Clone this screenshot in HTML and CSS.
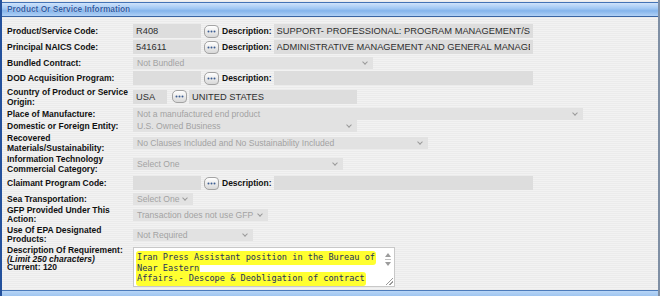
FILE: index.html
```html
<!DOCTYPE html>
<html lang="en">
<head>
  <meta charset="UTF-8" />
  <title>Product Or Service Information</title>
  <link rel="stylesheet" href="styles.css">
</head>
<body>
  <div class="panel">
    <div class="panel-head">Product Or Service Information</div>

    <div class="form">
      <label class="lbl">Product/Service Code:</label>
      <div class="field">
        <input class="txt code" value="R408" readonly>
        <button class="pick"><svg width="9" height="3" viewBox="0 0 9 3"><circle cx="1.5" cy="1.5" r="1"/><circle cx="4.5" cy="1.5" r="1"/><circle cx="7.5" cy="1.5" r="1"/></svg></button>
        <span class="lbl-inline">Description:</span>
        <input class="txt desc" value="SUPPORT- PROFESSIONAL: PROGRAM MANAGEMENT/SUPPORT" readonly>
      </div>

      <label class="lbl">Principal NAICS Code:</label>
      <div class="field">
        <input class="txt code" value="541611" readonly>
        <button class="pick"><svg width="9" height="3" viewBox="0 0 9 3"><circle cx="1.5" cy="1.5" r="1"/><circle cx="4.5" cy="1.5" r="1"/><circle cx="7.5" cy="1.5" r="1"/></svg></button>
        <span class="lbl-inline">Description:</span>
        <input class="txt desc" value="ADMINISTRATIVE MANAGEMENT AND GENERAL MANAGEMENT CONSULTING SERVICES" readonly>
      </div>

      <label class="lbl">Bundled Contract:</label>
      <div class="field">
        <div class="sel w-bundled">Not Bundled</div>
      </div>

      <label class="lbl">DOD Acquisition Program:</label>
      <div class="field">
        <input class="txt code" value="" readonly>
        <button class="pick"><svg width="9" height="3" viewBox="0 0 9 3"><circle cx="1.5" cy="1.5" r="1"/><circle cx="4.5" cy="1.5" r="1"/><circle cx="7.5" cy="1.5" r="1"/></svg></button>
        <span class="lbl-inline">Description:</span>
        <input class="txt desc" value="" readonly>
      </div>

      <label class="lbl">Country of Product or Service Origin:</label>
      <div class="field">
        <input class="txt country" value="USA" readonly>
        <button class="pick pick-country"><svg width="9" height="3" viewBox="0 0 9 3"><circle cx="1.5" cy="1.5" r="1"/><circle cx="4.5" cy="1.5" r="1"/><circle cx="7.5" cy="1.5" r="1"/></svg></button>
        <input class="txt country-name" value="UNITED STATES" readonly>
      </div>

      <label class="lbl">Place of Manufacture:</label>
      <div class="field">
        <div class="sel w-place">Not a manufactured end product</div>
      </div>

      <label class="lbl">Domestic or Foreign Entity:</label>
      <div class="field">
        <div class="sel w-entity">U.S. Owned Business</div>
      </div>

      <label class="lbl">Recovered Materials/Sustainability:</label>
      <div class="field">
        <div class="sel w-recovered">No Clauses Included and No Sustainability Included</div>
      </div>

      <label class="lbl">Information Technology Commercial Category:</label>
      <div class="field">
        <div class="sel w-it">Select One</div>
      </div>

      <label class="lbl">Claimant Program Code:</label>
      <div class="field">
        <input class="txt code" value="" readonly>
        <button class="pick"><svg width="9" height="3" viewBox="0 0 9 3"><circle cx="1.5" cy="1.5" r="1"/><circle cx="4.5" cy="1.5" r="1"/><circle cx="7.5" cy="1.5" r="1"/></svg></button>
        <span class="lbl-inline">Description:</span>
        <input class="txt desc" value="" readonly>
      </div>

      <label class="lbl">Sea Transportation:</label>
      <div class="field">
        <div class="sel w-sea">Select One</div>
      </div>

      <label class="lbl lbl-tight">GFP Provided Under This Action:</label>
      <div class="field">
        <div class="sel w-gfp">Transaction does not use GFP</div>
      </div>

      <label class="lbl lbl-tight">Use Of EPA Designated Products:</label>
      <div class="field">
        <div class="sel w-epa">Not Required</div>
      </div>

      <div class="lbl lbl-req">
        <div>Description Of Requirement:</div>
        <div class="note">(Limit 250 characters)</div>
        <div>Current: 120</div>
      </div>
      <div class="field field-top">
        <div class="memo">
          <div class="memo-text"><span class="hl">Iran Press Assistant position in the Bureau of</span><br><span class="hl">Near Eastern</span><br><span class="hl">Affairs.- Descope &amp; Deobligation of contract</span></div>
          <div class="memo-bar">
            <span class="arr arr-up"></span>
            <span class="arr-line"></span>
            <span class="arr arr-down"></span>
            <span class="grip"></span>
          </div>
        </div>
      </div>
    </div>

    <div class="panel-foot"></div>
  </div>
</body>
</html>
```

FILE: styles.css
```css
:root {
  --border-blue: #24519c;
  --head-text: #2f5ca3;
  --field-bg: #dddddd;
  --select-bg: #e2e2e2;
  --label-color: #111111;
  --value-color: #2e2e2e;
  --muted: #a3a3a3;
  --marker: #ffff30;
}

* {
  box-sizing: border-box;
}

body {
  margin: 0;
  font-family: "Liberation Sans", Arial, sans-serif;
  background: #ffffff;
}

.panel {
  height: 296px;
  display: flex;
  flex-direction: column;
  padding-top: 2px;
  border-left: 2px solid var(--border-blue);
  border-right: 2px solid #7f8fa4;
  background: repeating-linear-gradient(to bottom, #f2f2f2 0 1px, #ebebeb 1px 2px);
}

.panel-head {
  height: 15px;
  padding-left: 5px;
  border-top: 1px solid #4373b6;
  border-bottom: 1px solid #3965a3;
  background: linear-gradient(#cfe3fb, #9ec6f3 45%, #84b4eb 60%, #b0d1f6);
  color: var(--head-text);
  font-size: 8.3px;
  font-weight: bold;
  line-height: 13px;
  text-shadow: 0 0 1px #ffffff;
}

.form {
  flex: 1;
  display: grid;
  grid-template-columns: 126px 1fr;
  grid-template-rows: 16px 16px 15px 16px 21px 13px 12px 21px 21px 18px 13px 19px 22px auto;
  padding: 6px 0 0 5px;
}

.lbl {
  align-self: center;
  color: var(--label-color);
  font-size: 8.5px;
  font-weight: bold;
  line-height: 10px;
}

.lbl-tight {
  line-height: 9px;
}

.lbl-req {
  align-self: start;
  line-height: 8.6px;
}

.note {
  font-style: italic;
}

.field {
  display: flex;
  align-items: center;
}

.field-top {
  align-items: flex-start;
}

.txt {
  height: 14px;
  margin: 0;
  padding: 0 3px;
  border: none;
  outline: none;
  background: var(--field-bg);
  color: var(--value-color);
  font-family: "Liberation Sans", Arial, sans-serif;
  font-size: 9.3px;
}

.code {
  width: 68px;
}

.desc {
  width: 259px;
  margin-left: 2px;
}

.country {
  width: 34px;
}

.country-name {
  width: 168px;
  margin-left: 2px;
}

.pick {
  width: 15px;
  height: 13px;
  margin-left: 3px;
  padding: 0;
  display: flex;
  align-items: center;
  justify-content: center;
  border: 1px solid #a3a3a3;
  border-radius: 5px 4px 4px 5px;
  background: linear-gradient(#ffffff, #d8d8d8);
  fill: #3b5c91;
}

.pick-country {
  margin-left: 5px;
}

.lbl-inline {
  margin-left: 3px;
  color: var(--label-color);
  font-size: 8.5px;
  font-weight: bold;
}

.sel {
  position: relative;
  height: 12px;
  padding-left: 4px;
  background: var(--select-bg);
  color: var(--muted);
  font-size: 8.6px;
  line-height: 12px;
  white-space: nowrap;
}

.sel::after {
  content: "";
  position: absolute;
  right: 6px;
  top: 3px;
  width: 3px;
  height: 3px;
  border-right: 1px solid #9a9a9a;
  border-bottom: 1px solid #9a9a9a;
  transform: rotate(45deg);
}

.w-bundled { width: 240px; }
.w-place { width: 450px; }
.w-entity { width: 224px; }
.w-recovered { width: 295px; }
.w-it { width: 210px; }
.w-sea { width: 60px; }
.w-gfp { width: 135px; }
.w-epa { width: 120px; }

.memo {
  width: 262px;
  height: 40px;
  margin-top: 1px;
  display: flex;
  border: 1px solid #c8c8c8;
  background: #ffffff;
}

.memo-text {
  flex: 1;
  padding: 4px 0 0 2px;
  color: #26335a;
  font-family: "DejaVu Sans Mono", "Liberation Mono", monospace;
  font-size: 8.6px;
  line-height: 10.5px;
  white-space: nowrap;
  overflow: hidden;
}

.hl {
  padding: 1px 1px 3px;
  background: var(--marker);
  border-radius: 3px;
}

.memo-bar {
  position: relative;
  width: 12px;
  display: flex;
  flex-direction: column;
  align-items: center;
  padding-top: 5px;
}

.arr {
  width: 0;
  height: 0;
  border-left: 3px solid transparent;
  border-right: 3px solid transparent;
}

.arr-up {
  border-bottom: 4px solid #9c9c9c;
}

.arr-down {
  border-top: 4px solid #9c9c9c;
}

.arr-line {
  width: 6px;
  height: 1px;
  margin: 2px 0;
  background: #c0c0c0;
}

.grip {
  position: absolute;
  right: 1px;
  bottom: 1px;
  width: 7px;
  height: 7px;
  background: linear-gradient(135deg, transparent 45%, #9a9a9a 45% 55%, transparent 55% 70%, #9a9a9a 70% 80%, transparent 80%);
}

.panel-foot {
  height: 6px;
  border-top: 1px solid #4c7bbb;
  background: linear-gradient(#b8d6f7, #9fc5f0);
}
```
